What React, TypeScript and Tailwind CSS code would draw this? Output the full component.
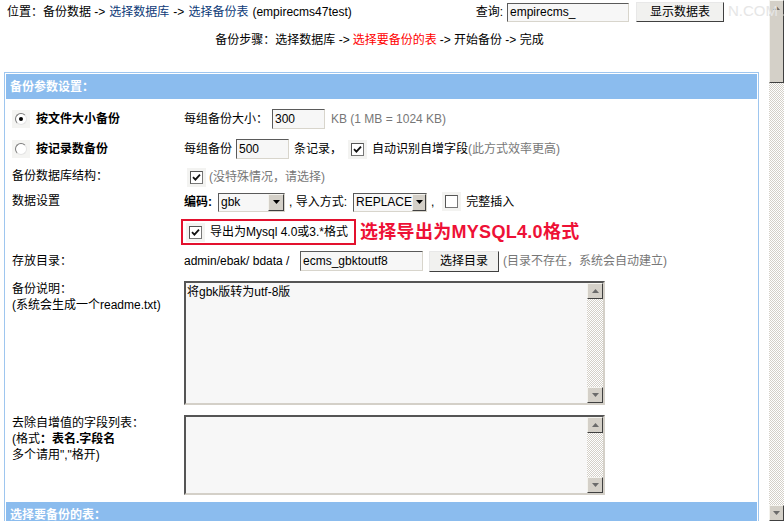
import type { ReactNode } from "react";

const font = "font-['Liberation_Sans','Noto_Sans_CJK_SC',sans-serif]";

function Check({ checked }: { checked?: boolean }) {
  return (
    <span className="inline-flex h-[19px] w-[19px] shrink-0 items-center justify-center bg-[#f3f3f1]">
      <span className="flex h-[13px] w-[13px] items-center justify-center border border-t-[#555] border-l-[#555] border-b-[#777] border-r-[#777] bg-white">
        {checked && (
          <svg width="9" height="9" viewBox="0 0 9 9">
            <path d="M1 4.2 L3.4 6.6 L8 1.6" stroke="#111" strokeWidth="1.8" fill="none" />
          </svg>
        )}
      </span>
    </span>
  );
}

function Radio({ checked }: { checked?: boolean }) {
  return (
    <span className="inline-flex h-[18px] w-[18px] shrink-0 items-center justify-center bg-[#f4f4f2]">
      <span className="flex h-[12px] w-[12px] items-center justify-center rounded-full border border-t-[#7a7a7a] border-l-[#7a7a7a] border-b-[#e4e4e4] border-r-[#e4e4e4] bg-white">
        {checked && <span className="h-[4px] w-[4px] rounded-full bg-black" />}
      </span>
    </span>
  );
}

function Field({ value, className }: { value: string; className: string }) {
  return (
    <span
      className={`flex items-center border-[1.5px] border-t-[#5a5a5a] border-l-[#5a5a5a] border-b-[#d8d5cc] border-r-[#d8d5cc] bg-[#f7f7f7] pl-[2px] text-[12px] text-black ${className}`}
    >
      {value}
    </span>
  );
}

function Button({ label, className }: { label: string; className: string }) {
  return (
    <span
      className={`flex items-center justify-center border border-t-[#e8e8e8] border-l-[#e8e8e8] border-b-[#404040] border-r-[#404040] bg-[#f1f1ef] text-[12px] text-black ${className}`}
    >
      {label}
    </span>
  );
}

function ArrowBtn({ dir, className }: { dir: "up" | "down"; className?: string }) {
  return (
    <span
      className={`flex h-[15px] w-[15px] shrink-0 items-center justify-center border border-t-[#f4f3ee] border-l-[#f4f3ee] border-b-[#404040] border-r-[#404040] bg-[#d4d0c8] ${className ?? ""}`}
    >
      <svg width="7" height="4" viewBox="0 0 7 4">
        {dir === "up" ? <path d="M3.5 0 L7 4 L0 4 Z" fill="#6b6b6b" /> : <path d="M0 0 L7 0 L3.5 4 Z" fill="#6b6b6b" />}
      </svg>
    </span>
  );
}

function Select({ value, className }: { value: string; className: string }) {
  return (
    <span
      className={`flex h-[19px] items-center justify-between border border-t-[#5a5a5a] border-l-[#5a5a5a] border-b-[#d8d5cc] border-r-[#d8d5cc] bg-[#f7f7f7] pl-[2px] text-[12px] ${className}`}
    >
      <span>{value}</span>
      <span className="flex h-[17px] w-[16px] items-center justify-center border border-t-[#f4f3ee] border-l-[#f4f3ee] border-b-[#404040] border-r-[#404040] bg-[#d4d0c8]">
        <svg width="7" height="4" viewBox="0 0 7 4">
          <path d="M0 0 L7 0 L3.5 4 Z" fill="#000" />
        </svg>
      </span>
    </span>
  );
}

function TextArea({ text, className }: { text?: string; className: string }) {
  return (
    <div
      className={`flex w-[421px] border-2 border-t-[#555] border-l-[#555] border-b-[#d4d0c8] border-r-[#d4d0c8] bg-[#f7f7f7] ${className}`}
    >
      <div className="flex-1 pl-[1px] pt-[1px] text-[12px] leading-[16px] text-black">{text}</div>
      <div className="flex w-[16px] flex-col bg-[#fff] bg-[image:repeating-conic-gradient(#d4d0c8_0_25%,#ffffff_0_50%)] bg-[length:2px_2px]">
        <ArrowBtn dir="up" className="h-[16px] w-[16px]" />
        <div className="flex-1" />
        <ArrowBtn dir="down" className="h-[16px] w-[16px]" />
      </div>
    </div>
  );
}

function Row({ label, h, children, top }: { label: ReactNode; h: string; children: ReactNode; top?: boolean }) {
  return (
    <div className={`flex ${top ? "items-start" : "items-center"} ${h}`}>
      <div className="w-[178px] shrink-0 pl-[6px]">{label}</div>
      <div className="flex flex-1 items-center">{children}</div>
    </div>
  );
}

export default function App() {
  return (
    <div className={`relative flex h-[521px] w-[784px] overflow-hidden bg-white text-[12px] leading-[16px] text-black ${font}`}>
      <div className="w-[769px] shrink-0">
        {/* top bar */}
        <div className="flex h-[24px] items-center pl-[7px]">
          <span>位置：备份数据 -&gt; </span>
          <span className="ml-[4px] text-[#0d3a78]">选择数据库</span>
          <span className="ml-[4px]">-&gt;</span>
          <span className="ml-[4px] text-[#0d3a78]">选择备份表</span>
          <span className="ml-[4px]">(empirecms47test)</span>
          <span className="ml-auto">查询:</span>
          <Field value="empirecms_" className="ml-[4px] h-[19px] w-[122px]" />
          <Button label="显示数据表" className="ml-[7px] mr-[45px] h-[20px] w-[88px]" />
        </div>

        <div className="flex h-[32px] items-center justify-center pr-[10px]">
          <span>备份步骤：选择数据库 -&gt; </span>
          <span className="ml-[3px] text-[#ff0000]">选择要备份的表</span>
          <span className="ml-[3px]">-&gt; 开始备份 -&gt; 完成</span>
        </div>

        {/* parameters table */}
        <div className="ml-[4px] mt-[16px] w-[755px] border border-[#9ec6ef] p-px">
          <div className="flex h-[25px] items-center bg-[#8bbcee] pl-[4px] font-bold text-white">备份参数设置：</div>
          <div className="flex flex-col pt-[5px]">
            <Row
              h="h-[30px]"
              label={
                <span className="flex items-center gap-[6px] font-bold">
                  <Radio checked />
                  按文件大小备份
                </span>
              }
            >
              <span>每组备份大小：</span>
              <Field value="300" className="ml-[4px] h-[20px] w-[53px]" />
              <span className="ml-[6px] text-[#777]">KB (1 MB = 1024 KB)</span>
            </Row>
            <Row
              h="h-[30px]"
              label={
                <span className="flex items-center gap-[6px] font-bold">
                  <Radio />
                  按记录数备份
                </span>
              }
            >
              <span>每组备份</span>
              <Field value="500" className="ml-[4px] h-[20px] w-[53px]" />
              <span className="ml-[5px]">条记录，</span>
              <span className="ml-[6px]">
                <Check checked />
              </span>
              <span className="ml-[5px]">自动识别自增字段</span>
              <span className="text-[#777]">(此方式效率更高)</span>
            </Row>
            <Row h="h-[26px]" label={<span className="block pb-[2px]">备份数据库结构：</span>}>
              <span className="ml-[3px]">
                <Check checked />
              </span>
              <span className="ml-[3px] text-[#777]">(没特殊情况，请选择)</span>
            </Row>
            <Row h="h-[24px]" label={<span className="block pt-[1px] pb-[4px]">数据设置</span>}>
              <span className="w-[33px] font-bold">编码:</span>
              <Select value="gbk" className="ml-[1px] w-[67px]" />
              <span className="ml-[4px] w-[62px]">, 导入方式:</span>
              <Select value="REPLACE" className="ml-[2px] w-[74px]" />
              <span className="ml-[4px]">,</span>
              <span className="ml-[8px]">
                <Check />
              </span>
              <span className="ml-[5px]">完整插入</span>
            </Row>
            <Row h="h-[36px]" label={null}>
              <span className="-ml-[3px] flex h-[26px] w-[175px] items-center border-2 border-[#e3112e] pl-[3px]">
                <Check checked />
                <span className="ml-[5px]">导出为Mysql 4.0或3.*格式</span>
              </span>
              <span className="ml-[4px] text-[18px] font-bold leading-[22px] tracking-[0.3px] text-[#ee1136]">选择导出为MYSQL4.0格式</span>
            </Row>
            <Row h="h-[22px]" label={<span className="block">存放目录：</span>}>
              <span className="w-[112px]">admin/ebak/ bdata /</span>
              <Field value="ecms_gbktoutf8" className="ml-[4px] h-[20px] w-[123px]" />
              <Button label="选择目录" className="ml-[6px] h-[21px] w-[70px]" />
              <span className="ml-[4px] text-[#777]">(目录不存在，系统会自动建立)</span>
            </Row>
            <div className="flex h-[138px] items-start pt-[9px]">
              <div className="w-[178px] shrink-0 pl-[6px] leading-[16px]">
                <div>备份说明：</div>
                <div>(系统会生成一个readme.txt)</div>
              </div>
              <TextArea text="将gbk版转为utf-8版" className="h-[124px]" />
            </div>
            <div className="flex h-[92px] items-start pt-[5px]">
              <div className="w-[178px] shrink-0 pl-[6px] leading-[16px]">
                <div>去除自增值的字段列表：</div>
                <div>
                  (格式<span className="font-bold">：表名.字段名</span>
                </div>
                <div>多个请用&quot;,&quot;格开)</div>
              </div>
              <TextArea className="h-[80px]" />
            </div>
          </div>
          <div className="flex h-[25px] items-center bg-[#8bbcee] pl-[4px] font-bold text-white">选择要备份的表：</div>
        </div>
      </div>

      {/* window scrollbar */}
      <div className="flex h-[521px] w-[15px] shrink-0 flex-col bg-[image:repeating-conic-gradient(#d4d0c8_0_25%,#ffffff_0_50%)] bg-[length:2px_2px]">
        <ArrowBtn dir="up" className="h-[12px] w-[15px] border-b-[#d4d0c8]" />
        <div className="h-[68px] w-[15px] border border-t-[#d4d0c8] border-l-[#f4f3ee] border-b-[#404040] border-r-[#404040] bg-[#d4d0c8]" />
        <div className="flex-1" />
        <ArrowBtn dir="down" className="h-[16px] w-[15px]" />
      </div>

      <span className="pointer-events-none absolute left-[728px] top-[3px] text-[15px] text-[#e6e6e6]">N.COM</span>
    </div>
  );
}
